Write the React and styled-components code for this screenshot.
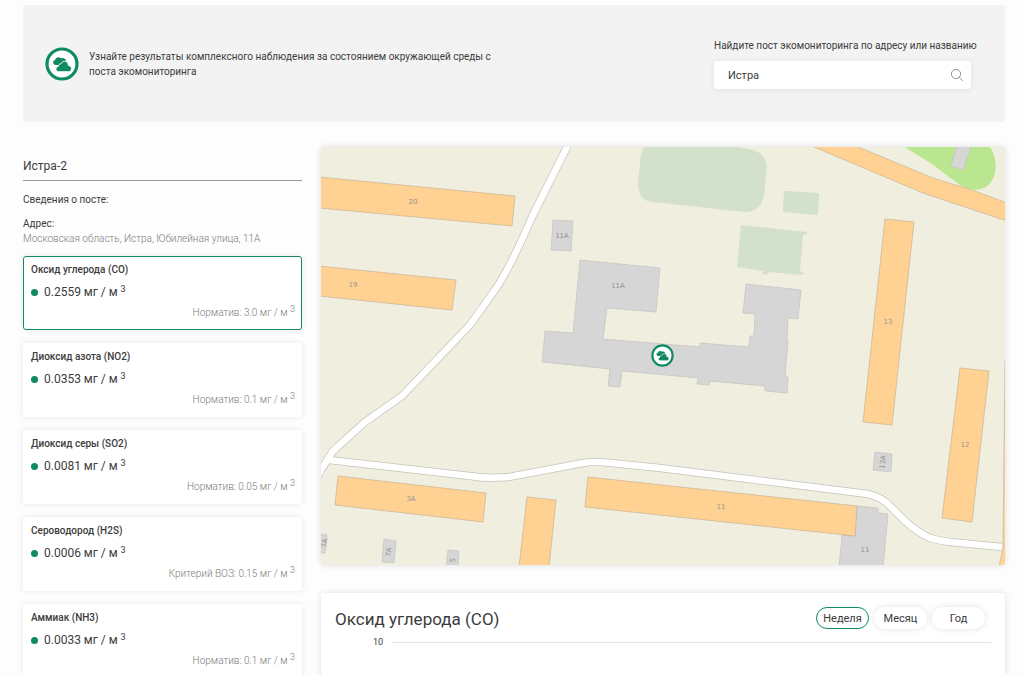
import React, { useState } from "react";
import styled, { createGlobalStyle, css } from "styled-components";

const colors = {
  green: "#0f8a62",
  text: "#3c3c3c",
  muted: "#7a7a7a",
  housing: "#ffd293",
  housingLine: "#c9b294",
  building: "#d7d6d6",
  buildingLine: "#c4c2c2",
  pitch: "#d3e0cb",
};

const GlobalStyle = createGlobalStyle`
  * {
    box-sizing: border-box;
  }

  body {
    margin: 0;
    background: #fdfdfd;
    color: ${colors.text};
    font-family: Roboto, "Noto Sans", sans-serif;
    font-size: 10px;
    line-height: 15px;
  }

  h1, h2, h3, p {
    margin: 0;
    font-weight: 400;
  }

  button, input {
    font-family: inherit;
    color: inherit;
  }
`;

const Page = styled.div`
  height: 100vh;
  overflow: hidden;
  padding: 5px 19px 0 23px;
`;

const Banner = styled.header`
  display: flex;
  align-items: center;
  justify-content: space-between;
  height: 117px;
  padding: 0 34px 0 22px;
  background: #f3f3f3;
`;

const Intro = styled.div`
  display: flex;
  align-items: center;
  gap: 10px;
`;

const IntroText = styled.p`
  max-width: 410px;
`;

const Search = styled.form`
  width: 257px;
`;

const SearchLabel = styled.label`
  display: block;
  margin-bottom: 8px;
  white-space: nowrap;
`;

const SearchField = styled.div`
  display: flex;
  align-items: center;
  height: 28px;
  padding: 0 7px 0 14px;
  background: #fff;
  border-radius: 3px;
  box-shadow: 0 1px 6px rgba(0, 0, 0, 0.08);
`;

const SearchInput = styled.input`
  flex: 1;
  min-width: 0;
  padding: 0;
  border: 0;
  outline: 0;
  background: none;
  font-size: 11px;
`;

const SearchButton = styled.button`
  display: flex;
  padding: 0;
  border: 0;
  background: none;
  color: #969696;
  cursor: pointer;
`;

const Content = styled.main`
  display: grid;
  grid-template-columns: 279px minmax(0, 1fr);
  gap: 19px;
  padding-top: 25px;
`;

const Sidebar = styled.aside`
  padding-top: 11px;
`;

const StationName = styled.h1`
  padding-bottom: 6px;
  border-bottom: 1px solid #999;
  font-size: 12px;
  line-height: 16px;
`;

const StationInfo = styled.section`
  padding: 11px 0 10px;
`;

const InfoTitle = styled.h2`
  margin-bottom: 9px;
  font-size: 10px;
  line-height: 15px;
`;

const InfoLabel = styled.p`
  font-size: 10px;
`;

const Address = styled.p`
  color: ${colors.muted};
  font-size: 10px;
  font-weight: 300;
`;

const CardList = styled.div`
  display: grid;
  gap: 13px;
`;

const Card = styled.button`
  display: block;
  width: 100%;
  height: 74px;
  padding: 3px 6px 7px 7px;
  border: 1px solid transparent;
  border-radius: 3px;
  background: #fff;
  box-shadow: 0 0 6px rgba(0, 0, 0, 0.09);
  text-align: left;
  cursor: pointer;

  ${(props) =>
    props.$active &&
    css`
      border-color: ${colors.green};
    `}
`;

const CardTitle = styled.span`
  display: block;
  font-size: 10px;
  font-weight: 500;
  line-height: 15px;
`;

const Value = styled.span`
  display: flex;
  align-items: center;
  gap: 6px;
  margin-top: 6px;
  font-size: 12px;
  line-height: 18px;

  &::before {
    content: "";
    width: 7px;
    height: 7px;
    border-radius: 50%;
    background: ${colors.green};
  }
`;

const Limit = styled.span`
  display: block;
  margin-top: 4px;
  color: ${colors.muted};
  font-size: 10px;
  font-weight: 300;
  line-height: 15px;
  text-align: right;
`;

const Cube = styled.sup`
  font-size: 9px;
  line-height: 0;
  vertical-align: 4px;
`;

const MainColumn = styled.div`
  display: grid;
  align-content: start;
  gap: 28px;
`;

const MapPanel = styled.section`
  height: 418px;
  overflow: hidden;
  border-radius: 3px;
  background: #f0efdf;
  box-shadow: 0 0 6px rgba(0, 0, 0, 0.14);
`;

const MapDrawing = styled.svg`
  display: block;
  width: 100%;
  height: 100%;
`;

const MapLabel = styled.text`
  fill: #96928e;
  font-family: "DejaVu Sans", sans-serif;
  font-size: 7px;
  text-anchor: middle;
  dominant-baseline: central;
`;

const ChartPanel = styled.section`
  min-height: 300px;
  padding: 12px 14px;
  border-radius: 3px;
  background: #fff;
  box-shadow: 0 0 6px rgba(0, 0, 0, 0.12);
`;

const ChartHead = styled.div`
  display: flex;
  align-items: center;
  justify-content: space-between;
  padding-right: 6px;
`;

const ChartTitle = styled.h2`
  font-size: 17px;
  line-height: 28px;
`;

const Periods = styled.div`
  display: flex;
  gap: 5px;
`;

const PeriodButton = styled.button`
  width: 53px;
  height: 22px;
  margin-bottom: 2px;
  padding: 0;
  border: 1px solid ${(props) => (props.$active ? colors.green : "transparent")};
  border-radius: 11px;
  background: #fff;
  box-shadow: ${(props) =>
    props.$active ? "none" : "0 0 6px rgba(0, 0, 0, 0.12)"};
  font-size: 11px;
  cursor: pointer;
`;

const ChartScale = styled.div`
  display: flex;
  align-items: center;
  gap: 8px;
  padding-left: 38px;
  font-size: 9px;
  line-height: 18px;

  &::after {
    content: "";
    flex: 1;
    height: 1px;
    background: #e4e4e4;
  }
`;

const pollutants = [
  { name: "Оксид углерода (CO)", value: "0.2559", limit: "Норматив: 3.0" },
  { name: "Диоксид азота (NO2)", value: "0.0353", limit: "Норматив: 0.1" },
  { name: "Диоксид серы (SO2)", value: "0.0081", limit: "Норматив: 0.05" },
  { name: "Сероводород (H2S)", value: "0.0006", limit: "Критерий ВОЗ: 0.15" },
  { name: "Аммиак (NH3)", value: "0.0033", limit: "Норматив: 0.1" },
];

const periods = ["Неделя", "Месяц", "Год"];

const pitches = [
  "M324 -1Q319 6 319 18L317 36Q317 54 332 55L424 65Q440 65 443 48L446 20Q445 5 428 2L410 -1Z",
  "M463 44L498 46L497 68L462 65Z",
  "M420 78L486 85L485 88L482 88L479 125L483 126L482 128L447 125L446 128L441 127L442 124L416 120Z",
];

const housing = [
  "M-2 30L194 49L191 79L-2 61Z",
  "M-2 119L135 133L131 163L-2 149Z",
  "M564 72L593 75L571 278L542 275Z",
  "M639 221L668 224L651 375L621 371Z",
  "M267 330L536 359L534 389L264 360Z",
  "M17 329L165 346L162 375L14 358Z",
  "M206 350L235 353L228 420L198 420Z",
];

const buildings = [
  "M232 73L252 74L250 104L230 103Z",
  "M259 113L339 121L335 165L286 161L282 192L379 200L379 196L428 200L429 189L433 189L434 167L422 166L425 137L480 143L477 172L467 171L466 193L467 194L464 230L467 230L466 246L444 244L444 239L389 234L388 238L376 237L377 231L301 224L299 240L287 239L289 222L221 215L224 184L252 186Z",
  "M636 -2L630 19L642 23L651 -2Z",
  "M554 305L571 307L570 325L552 323Z",
  "M536 359L557 361L557 366L567 367L562 420L518 420L521 388L534 389Z",
  "M63 392L75 394L73 416L61 415Z",
  "M127 403L138 404L137 420L125 420Z",
  "M-2 387L6 388L4 406L-2 406Z",
];

const roads = [
  "M248 -4L211 70Q190 119 174 143L149 178L81 249L44 275L12 304L0 323L-5 333",
  "M8 313L149 329Q166 332 188 330L262 316Q272 314 290 316L339 321L547 347Q560 350 568 358L584 374Q596 385 609 391Q620 394 629 395L681 400",
];

const labels = [
  { text: "20", x: 92, y: 55 },
  { text: "19", x: 32, y: 138 },
  { text: "11А", x: 241, y: 89 },
  { text: "11А", x: 297, y: 139 },
  { text: "13", x: 567, y: 175 },
  { text: "12", x: 644, y: 298 },
  { text: "11", x: 400, y: 360 },
  { text: "11", x: 544, y: 403 },
  { text: "3А", x: 90, y: 352 },
  { text: "13А", x: 562, y: 315, turned: true },
  { text: "7А", x: 68, y: 405, turned: true },
  { text: "5", x: 132, y: 413, turned: true },
  { text: "7А", x: 4, y: 396, turned: true },
];

// 34x34 badge: ring with two clouds, the back one cut off by a white outline
function CloudBadge(props) {
  return (
    <svg width="34" height="34" viewBox="0 0 34 34" aria-hidden="true" {...props}>
      <circle cx="17" cy="17" r="15" fill="#fff" stroke={colors.green} strokeWidth="3.2" />
      <path
        d="M10.6 17.9C8.6 17.5 7.8 16.2 8.2 14.8C8.5 13.6 9.3 13 10.2 12.9C10.7 11 12.2 10.1 13.9 10.3C14.8 10.4 15.5 10.8 16 11.4C18.2 10.4 20.5 11.3 21 13.6C21.7 14.2 21.8 15 21.5 16L17 18Z"
        fill={colors.green}
      />
      <path
        d="M13.9 24.7C11.9 24.7 10.8 23.4 10.9 21.9C11 20.5 12 19.7 13.2 19.6C13.2 17.8 14.5 16.7 16 16.8C17 14.5 19 13.7 21 14.5C22.6 15.2 23.4 16.6 23.3 18.5C25.3 18.7 26.6 20 26.5 21.8C26.4 23.6 25.2 24.7 23.4 24.7Z"
        fill={colors.green}
        stroke="#fff"
        strokeWidth="0.9"
      />
    </svg>
  );
}

function SearchIcon() {
  return (
    <svg width="14" height="14" viewBox="0 0 14 14" fill="none" stroke="currentColor" aria-hidden="true">
      <circle cx="6" cy="6" r="4.6" />
      <path d="M9.4 9.4L12.6 12.6" strokeLinecap="round" />
    </svg>
  );
}

function StationMap() {
  return (
    <MapPanel aria-label="Карта">
      <MapDrawing viewBox="0 0 684 418" preserveAspectRatio="xMidYMid slice">
        {pitches.map((d) => (
          <path key={d} d={d} fill={colors.pitch} />
        ))}
        <path
          d="M582 -1L611 17L636 36Q648 45 660 42C673 38 679 22 671 3L668 -1Z"
          fill="#bbe690"
        />
        <g fill={colors.building} stroke={colors.buildingLine} strokeWidth="0.7">
          {buildings.map((d) => (
            <path key={d} d={d} />
          ))}
        </g>
        <g fill={colors.housing} stroke={colors.housingLine} strokeWidth="0.7">
          {housing.map((d) => (
            <path key={d} d={d} />
          ))}
          <path d="M530 -3L612 31L651 43L686 56L686 74L602 46L486 -3Z" />
          <path d="M684 213L682 401L678 420L686 420L686 213Z" />
        </g>
        <g fill="none" stroke="#c4c2ba" strokeWidth="8">
          {roads.map((d) => (
            <path key={d} d={d} />
          ))}
        </g>
        <g fill="none" stroke="#fff" strokeWidth="6.6">
          {roads.map((d) => (
            <path key={d} d={d} />
          ))}
        </g>
        {labels.map(({ text, x, y, turned }) => (
          <MapLabel
            key={`${x}-${y}`}
            x={x}
            y={y}
            transform={turned ? `rotate(-84 ${x} ${y})` : undefined}
          >
            {text}
          </MapLabel>
        ))}
        <CloudBadge x="330" y="197" width="23" height="23" />
      </MapDrawing>
    </MapPanel>
  );
}

const App = () => {
  const [query, setQuery] = useState("Истра");
  const [selected, setSelected] = useState(0);
  const [period, setPeriod] = useState(periods[0]);

  return (
    <>
      <GlobalStyle />
      <Page>
        <Banner>
          <Intro>
            <CloudBadge />
            <IntroText>
              Узнайте результаты комплексного наблюдения за состоянием
              окружающей среды с поста экомониторинга
            </IntroText>
          </Intro>
          <Search onSubmit={(e) => e.preventDefault()}>
            <SearchLabel htmlFor="post-search">
              Найдите пост экомониторинга по адресу или названию
            </SearchLabel>
            <SearchField>
              <SearchInput
                id="post-search"
                value={query}
                onChange={(e) => setQuery(e.target.value)}
              />
              <SearchButton type="submit" aria-label="Найти">
                <SearchIcon />
              </SearchButton>
            </SearchField>
          </Search>
        </Banner>

        <Content>
          <Sidebar>
            <StationName>Истра-2</StationName>
            <StationInfo>
              <InfoTitle>Сведения о посте:</InfoTitle>
              <InfoLabel>Адрес:</InfoLabel>
              <Address>Московская область, Истра, Юбилейная улица, 11А</Address>
            </StationInfo>
            <CardList>
              {pollutants.map((item, index) => (
                <Card
                  key={item.name}
                  type="button"
                  $active={index === selected}
                  aria-pressed={index === selected}
                  onClick={() => setSelected(index)}
                >
                  <CardTitle>{item.name}</CardTitle>
                  <Value>
                    <span>
                      {item.value} мг / м <Cube>3</Cube>
                    </span>
                  </Value>
                  <Limit>
                    {item.limit} мг / м <Cube>3</Cube>
                  </Limit>
                </Card>
              ))}
            </CardList>
          </Sidebar>

          <MainColumn>
            <StationMap />
            <ChartPanel>
              <ChartHead>
                <ChartTitle>{pollutants[selected].name}</ChartTitle>
                <Periods>
                  {periods.map((name) => (
                    <PeriodButton
                      key={name}
                      type="button"
                      $active={name === period}
                      aria-pressed={name === period}
                      onClick={() => setPeriod(name)}
                    >
                      {name}
                    </PeriodButton>
                  ))}
                </Periods>
              </ChartHead>
              <ChartScale>10</ChartScale>
            </ChartPanel>
          </MainColumn>
        </Content>
      </Page>
    </>
  );
};

export default App;
